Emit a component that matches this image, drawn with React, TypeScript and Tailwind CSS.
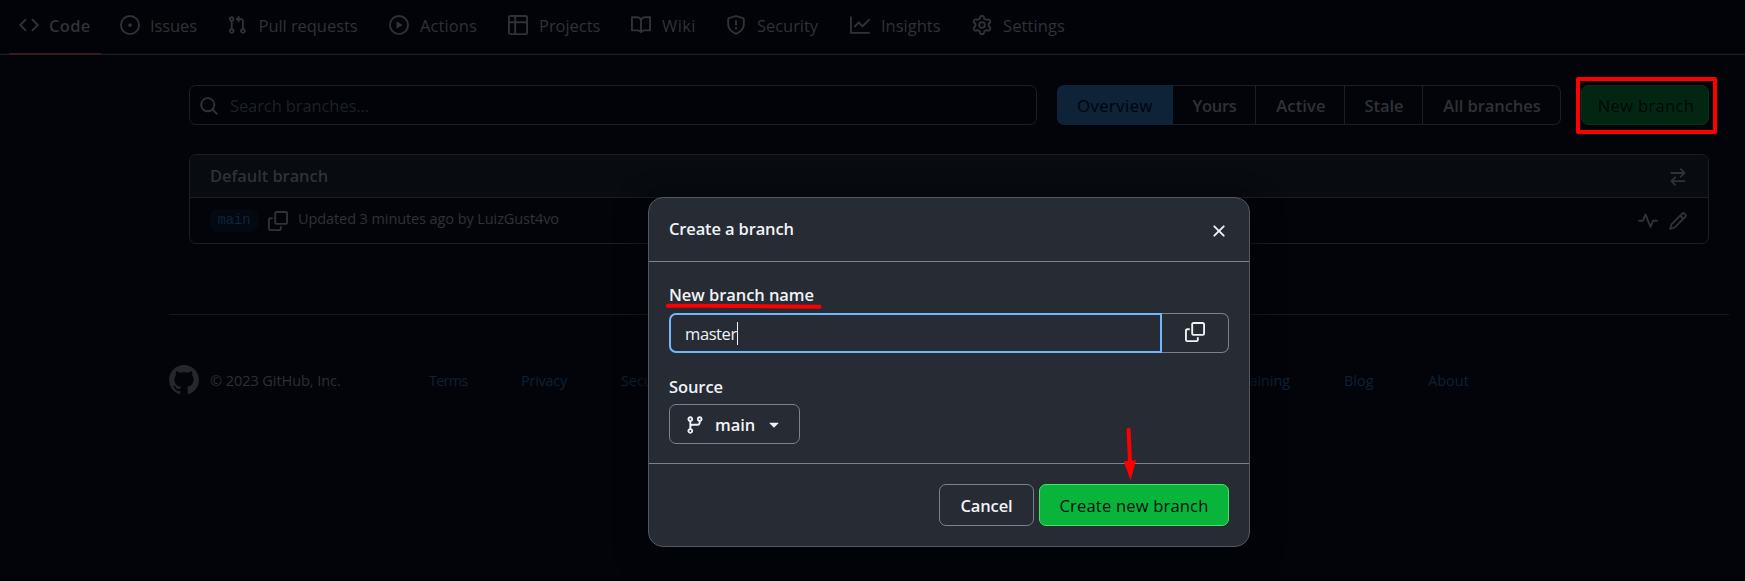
import React from "react";

type IconProps = { d: string; className?: string };

function Icon({ d, className = "" }: IconProps) {
  return (
    <svg viewBox="0 0 16 16" fill="currentColor" className={`block size-5 shrink-0 ${className}`}>
      <path d={d} />
    </svg>
  );
}

const P = {
  code: "m11.28 3.22 4.25 4.25a.75.75 0 0 1 0 1.06l-4.25 4.25a.749.749 0 0 1-1.275-.326.749.749 0 0 1 .215-.734L13.94 8l-3.72-3.72a.749.749 0 0 1 .326-1.275.749.749 0 0 1 .734.215Zm-6.56 0a.751.751 0 0 1 1.042.018.751.751 0 0 1 .018 1.042L2.06 8l3.72 3.72a.749.749 0 0 1-.326 1.275.749.749 0 0 1-.734-.215L.47 8.53a.75.75 0 0 1 0-1.06Z",
  issue: "M8 9.5a1.5 1.5 0 1 0 0-3 1.5 1.5 0 0 0 0 3ZM8 0a8 8 0 1 1 0 16A8 8 0 0 1 8 0ZM1.5 8a6.5 6.5 0 1 0 13 0 6.5 6.5 0 0 0-13 0Z",
  pull: "M1.5 3.25a2.25 2.25 0 1 1 3 2.122v5.256a2.251 2.251 0 1 1-1.5 0V5.372A2.25 2.25 0 0 1 1.5 3.25Zm5.677-.177L9.573.677A.25.25 0 0 1 10 .854V2.5h1A2.5 2.5 0 0 1 13.5 5v5.628a2.251 2.251 0 1 1-1.5 0V5a1 1 0 0 0-1-1h-1v1.646a.25.25 0 0 1-.427.177L7.177 3.427a.25.25 0 0 1 0-.354ZM3.75 2.5a.75.75 0 1 0 0 1.5.75.75 0 0 0 0-1.5Zm0 9.5a.75.75 0 1 0 0 1.5.75.75 0 0 0 0-1.5Zm8.25.75a.75.75 0 1 0 1.5 0 .75.75 0 0 0-1.5 0Z",
  play: "M8 0a8 8 0 1 1 0 16A8 8 0 0 1 8 0ZM1.5 8a6.5 6.5 0 1 0 13 0 6.5 6.5 0 0 0-13 0Zm4.879-2.773 4.264 2.559a.25.25 0 0 1 0 .428l-4.264 2.559A.25.25 0 0 1 6 10.559V5.442a.25.25 0 0 1 .379-.215Z",
  table: "M0 1.75C0 .784.784 0 1.75 0h12.5C15.216 0 16 .784 16 1.75v12.5A1.75 1.75 0 0 1 14.25 16H1.75A1.75 1.75 0 0 1 0 14.25ZM6.5 6.5v8h7.75a.25.25 0 0 0 .25-.25V6.5Zm8-1.5V1.75a.25.25 0 0 0-.25-.25H6.5V5Zm-13 1.5v7.75c0 .138.112.25.25.25H5v-8ZM5 5V1.5H1.75a.25.25 0 0 0-.25.25V5Z",
  book: "M0 1.75A.75.75 0 0 1 .75 1h4.253c1.227 0 2.317.59 3 1.501A3.743 3.743 0 0 1 11.006 1h4.245a.75.75 0 0 1 .75.75v10.5a.75.75 0 0 1-.75.75h-4.507a2.25 2.25 0 0 0-1.591.659l-.622.621a.75.75 0 0 1-1.06 0l-.622-.621A2.25 2.25 0 0 0 5.258 13H.75a.75.75 0 0 1-.75-.75Zm7.251 10.324.004-5.073-.002-2.253A2.25 2.25 0 0 0 5.003 2.5H1.5v9h3.757a3.75 3.75 0 0 1 1.994.574ZM8.755 4.75l-.004 7.322a3.752 3.752 0 0 1 1.992-.572H14.5v-9h-3.495a2.25 2.25 0 0 0-2.25 2.25Z",
  shield: "M7.467.133a1.748 1.748 0 0 1 1.066 0l5.25 1.68A1.75 1.75 0 0 1 15 3.48V7c0 1.566-.32 3.182-1.303 4.682-.983 1.498-2.585 2.813-5.032 3.855a1.697 1.697 0 0 1-1.33 0c-2.447-1.042-4.049-2.357-5.032-3.855C1.32 10.182 1 8.566 1 7V3.48a1.75 1.75 0 0 1 1.217-1.667Zm.61 1.429a.25.25 0 0 0-.153 0l-5.25 1.68a.25.25 0 0 0-.174.238V7c0 1.358.275 2.666 1.057 3.86.784 1.194 2.121 2.34 4.366 3.297a.196.196 0 0 0 .154 0c2.245-.956 3.582-2.104 4.366-3.298C13.225 9.666 13.5 8.36 13.5 7V3.48a.251.251 0 0 0-.174-.237l-5.25-1.68ZM8.75 4.75v3a.75.75 0 0 1-1.5 0v-3a.75.75 0 0 1 1.5 0ZM9 10.5a1 1 0 1 1-2 0 1 1 0 0 1 2 0Z",
  graph: "M1.5 1.75V13.5h13.75a.75.75 0 0 1 0 1.5H.75a.75.75 0 0 1-.75-.75V1.75a.75.75 0 0 1 1.5 0Zm14.28 2.53-5.25 5.25a.75.75 0 0 1-1.06 0L7 7.06 4.28 9.78a.751.751 0 0 1-1.042-.018.751.751 0 0 1-.018-1.042l3.25-3.25a.75.75 0 0 1 1.06 0L10 7.94l4.72-4.72a.751.751 0 0 1 1.042.018.751.751 0 0 1 .018 1.042Z",
  gear: "M8 0a8.2 8.2 0 0 1 .701.031C9.444.095 9.99.645 10.16 1.29l.288 1.107c.018.066.079.158.212.224.231.114.454.243.668.386.123.082.233.09.299.071l1.103-.303c.644-.176 1.392.021 1.82.63.27.385.506.792.704 1.218.315.675.111 1.422-.364 1.891l-.814.806c-.049.048-.098.147-.088.294.016.257.016.515 0 .772-.01.147.038.246.088.294l.814.806c.475.469.679 1.216.364 1.891a7.977 7.977 0 0 1-.704 1.217c-.428.61-1.176.807-1.82.63l-1.102-.302c-.067-.019-.177-.011-.3.071a5.909 5.909 0 0 1-.668.386c-.133.066-.194.158-.211.224l-.29 1.106c-.168.646-.715 1.196-1.458 1.26a8.006 8.006 0 0 1-1.402 0c-.743-.064-1.289-.614-1.458-1.26l-.289-1.106c-.018-.066-.079-.158-.212-.224a5.738 5.738 0 0 1-.668-.386c-.123-.082-.233-.09-.299-.071l-1.103.303c-.644.176-1.392-.021-1.82-.63a8.12 8.12 0 0 1-.704-1.218c-.315-.675-.111-1.422.363-1.891l.815-.806c.05-.048.098-.147.088-.294a6.214 6.214 0 0 1 0-.772c.01-.147-.038-.246-.088-.294l-.815-.806C.635 6.045.431 5.298.746 4.623a7.92 7.92 0 0 1 .704-1.217c.428-.61 1.176-.807 1.82-.63l1.102.302c.067.019.177.011.3-.071.214-.143.437-.272.668-.386.133-.066.194-.158.211-.224l.29-1.106C6.009.645 6.556.095 7.299.03 7.53.01 7.764 0 8 0Zm-.571 1.525c-.036.003-.108.036-.137.146l-.289 1.105c-.147.561-.549.967-.998 1.189-.173.086-.34.183-.5.29-.417.278-.97.423-1.529.27l-1.103-.303c-.109-.03-.175.016-.195.045-.22.312-.412.644-.573.99-.014.031-.021.11.059.19l.815.806c.411.406.562.957.53 1.456a4.709 4.709 0 0 0 0 .582c.032.499-.119 1.05-.53 1.456l-.815.806c-.081.08-.073.159-.059.19.162.346.353.677.573.989.02.03.085.076.195.046l1.102-.303c.56-.153 1.113-.008 1.53.27.161.107.328.204.501.29.447.222.85.629.997 1.189l.289 1.105c.029.109.101.143.137.146a6.6 6.6 0 0 0 1.142 0c.036-.003.108-.036.137-.146l.289-1.105c.147-.561.549-.967.998-1.189.173-.086.34-.183.5-.29.417-.278.97-.423 1.529-.27l1.103.303c.109.029.175-.016.195-.045.22-.313.411-.644.573-.99.014-.031.021-.11-.059-.19l-.815-.806c-.411-.406-.562-.957-.53-1.456a4.709 4.709 0 0 0 0-.582c-.032-.499.119-1.05.53-1.456l.815-.806c.081-.08.073-.159.059-.19a6.464 6.464 0 0 0-.573-.989c-.02-.03-.085-.076-.195-.046l-1.102.303c-.56.153-1.113.008-1.53-.27a4.44 4.44 0 0 0-.501-.29c-.447-.222-.85-.629-.997-1.189l-.289-1.105c-.029-.11-.101-.143-.137-.146a6.6 6.6 0 0 0-1.142 0ZM11 8a3 3 0 1 1-6 0 3 3 0 0 1 6 0ZM9.5 8a1.5 1.5 0 1 0-3.001.001A1.5 1.5 0 0 0 9.5 8Z",
  search: "M10.68 11.74a6 6 0 0 1-7.922-8.982 6 6 0 0 1 8.982 7.922l3.04 3.04a.749.749 0 0 1-.326 1.275.749.749 0 0 1-.734-.215ZM11.5 7a4.499 4.499 0 1 0-8.997 0A4.499 4.499 0 0 0 11.5 7Z",
  swap: "M5.22 14.78a.75.75 0 0 0 1.06-1.06L4.56 12h8.69a.75.75 0 0 0 0-1.5H4.56l1.72-1.72a.75.75 0 0 0-1.06-1.06l-3 3a.75.75 0 0 0 0 1.06l3 3Zm5.56-6.5a.75.75 0 1 1-1.06-1.06l1.72-1.72H2.75a.75.75 0 0 1 0-1.5h8.69L9.72 2.28a.75.75 0 0 1 1.06-1.06l3 3a.75.75 0 0 1 0 1.06l-3 3Z",
  pulse: "M6 2c.306 0 .582.187.696.471L10 10.731l1.304-3.26A.751.751 0 0 1 12 7h3.25a.75.75 0 0 1 0 1.5h-2.742l-1.812 4.528a.751.751 0 0 1-1.392 0L6 4.77 4.696 8.03A.75.75 0 0 1 4 8.5H.75a.75.75 0 0 1 0-1.5h2.742l1.812-4.529A.751.751 0 0 1 6 2Z",
  pencil: "M11.013 1.427a1.75 1.75 0 0 1 2.474 0l1.086 1.086a1.75 1.75 0 0 1 0 2.474l-8.61 8.61c-.21.21-.47.364-.756.445l-3.251.93a.75.75 0 0 1-.927-.928l.929-3.25c.081-.286.235-.547.445-.758l8.61-8.61Zm.176 4.823L9.75 4.81l-6.286 6.287a.253.253 0 0 0-.064.108l-.558 1.953 1.953-.558a.253.253 0 0 0 .108-.064Zm1.238-3.763a.25.25 0 0 0-.354 0L10.811 3.75l1.439 1.44 1.263-1.263a.25.25 0 0 0 0-.354Z",
  copy: "M0 6.75C0 5.784.784 5 1.75 5h1.5a.75.75 0 0 1 0 1.5h-1.5a.25.25 0 0 0-.25.25v7.5c0 .138.112.25.25.25h7.5a.25.25 0 0 0 .25-.25v-1.5a.75.75 0 0 1 1.5 0v1.5A1.75 1.75 0 0 1 9.25 16h-7.5A1.75 1.75 0 0 1 0 14.25ZM5 1.75C5 .784 5.784 0 6.75 0h7.5C15.216 0 16 .784 16 1.75v7.5A1.75 1.75 0 0 1 14.25 11h-7.5A1.75 1.75 0 0 1 5 9.25Zm1.75-.25a.25.25 0 0 0-.25.25v7.5c0 .138.112.25.25.25h7.5a.25.25 0 0 0 .25-.25v-7.5a.25.25 0 0 0-.25-.25Z",
  close: "M3.72 3.72a.75.75 0 0 1 1.06 0L8 6.94l3.22-3.22a.749.749 0 0 1 1.275.326.749.749 0 0 1-.215.734L9.06 8l3.22 3.22a.749.749 0 0 1-.326 1.275.749.749 0 0 1-.734-.215L8 9.06l-3.22 3.22a.751.751 0 0 1-1.042-.018.751.751 0 0 1-.018-1.042L6.94 8 3.72 4.78a.75.75 0 0 1 0-1.06Z",
  branch: "M9.5 3.25a2.25 2.25 0 1 1 3 2.122V6A2.5 2.5 0 0 1 10 8.5H6a1 1 0 0 0-1 1v1.128a2.251 2.251 0 1 1-1.5 0V5.372a2.25 2.25 0 1 1 1.5 0v1.836A2.493 2.493 0 0 1 6 7h4a1 1 0 0 0 1-1v-.628A2.25 2.25 0 0 1 9.5 3.25Zm-6 0a.75.75 0 1 0 1.5 0 .75.75 0 0 0-1.5 0Zm8.25-.75a.75.75 0 1 0 0 1.5.75.75 0 0 0 0-1.5ZM4.25 12a.75.75 0 1 0 0 1.5.75.75 0 0 0 0-1.5Z",
  caret: "m4.427 7.427 3.396 3.396a.25.25 0 0 0 .354 0l3.396-3.396A.25.25 0 0 0 11.396 7H4.604a.25.25 0 0 0-.177.427Z",
  github: "M8 0c4.42 0 8 3.58 8 8a8.013 8.013 0 0 1-5.45 7.59c-.4.08-.55-.17-.55-.38 0-.27.01-1.13.01-2.2 0-.75-.25-1.23-.54-1.48 1.78-.2 3.65-.88 3.65-3.95 0-.88-.31-1.59-.82-2.15.08-.2.36-1.02-.08-2.12 0 0-.67-.22-2.2.82-.64-.18-1.32-.27-2-.27-.68 0-1.36.09-2 .27-1.53-1.03-2.2-.82-2.2-.82-.44 1.1-.16 1.92-.08 2.12-.51.56-.82 1.28-.82 2.15 0 3.06 1.86 3.75 3.64 3.95-.23.2-.44.55-.51 1.07-.46.21-1.61.55-2.33-.66-.15-.24-.6-.83-1.23-.82-.67.01-.27.38.01.53.34.19.73.9.82 1.13.16.45.68 1.31 2.69.94 0 .67.01 1.3.01 1.49 0 .21-.15.45-.55.38A7.995 7.995 0 0 1 0 8c0-4.42 3.58-8 8-8Z",
};

const tabs = [
  { label: "Code", d: P.code, cls: "w-[101px] gap-2.5 font-semibold tracking-[0.3px]" },
  { label: "Issues", d: P.issue, cls: "w-[107px] gap-2.5 tracking-[-0.1px]" },
  { label: "Pull requests", d: P.pull, cls: "w-[162px] gap-[11.5px] tracking-[-0.05px]" },
  { label: "Actions", d: P.play, cls: "w-[119px] gap-[11px] tracking-[0.1px]" },
  { label: "Projects", d: P.table, cls: "w-[123px] gap-[11px] tracking-[-0.05px]" },
  { label: "Wiki", d: P.book, cls: "w-[95px] gap-[11px] tracking-[0.4px]" },
  { label: "Security", d: P.shield, cls: "w-[124px] gap-[11px] tracking-[-0.05px]" },
  { label: "Insights", d: P.graph, cls: "w-[122px] gap-[11px]" },
  { label: "Settings", d: P.gear, cls: "w-[110px] gap-[11px] tracking-[0.1px]" },
];

const filters = [
  { label: "Yours", cls: "w-[83px] border-r pl-px tracking-[-0.3px]" },
  { label: "Active", cls: "w-[89px] border-r pl-[2px] tracking-[0.15px]" },
  { label: "Stale", cls: "w-[78px] border-r pl-px tracking-[-0.1px]" },
  { label: "All branches", cls: "w-[138px] rounded-r-[7px] border-r pl-px tracking-[-0.06px]" },
];

const middleLinks = ["Security", "Status", "Docs", "Contact GitHub", "Pricing", "API", "Training"];

function RepoNav() {
  return (
    <nav className="flex h-[55px] shrink-0 flex-col bg-[#010308]">
      <div className="flex h-[53px] pl-[19px]">
        {tabs.map((t) => (
          <a key={t.label} className={`flex shrink-0 items-center pb-[3px] ${t.cls}`}>
            <Icon d={t.d} />
            <span className="pt-[2px]">{t.label}</span>
          </a>
        ))}
      </div>
      <div className="flex h-[2px] border-b border-[#1d1f23] bg-[#08090d] pl-[9px]">
        <div className="h-[2px] w-[92px] bg-[#381b1c]" />
      </div>
    </nav>
  );
}

function Toolbar() {
  return (
    <div className="flex h-10">
      <div className="flex w-[848px] items-center gap-[11px] rounded-[7px] border border-[#1c1e23] bg-[#010308] pl-[9px]">
        <Icon d={P.search} className="mt-[2px]" />
        <span className="pt-px tracking-[-0.1px] text-[#1d2126]">Search branches...</span>
      </div>
      <div className="ml-5 flex font-semibold">
        <span className="flex w-[116px] items-center justify-center rounded-l-[7px] bg-[#0e2238] pt-px font-normal tracking-[0.52px] text-[#020409]">
          Overview
        </span>
        {filters.map((f) => (
          <span key={f.label} className={`flex items-center justify-center border-y border-[#1c1e23] pt-px ${f.cls}`}>
            {f.label}
          </span>
        ))}
      </div>
      <div className="relative ml-5 flex w-32 items-center justify-center rounded-[7px] border border-[#0a3016] bg-[#032612] pt-[2px] pl-[2px] tracking-[0.34px] text-[#010705]">
        New branch
        <div className="absolute -top-[9px] -left-[6px] z-10 h-[57px] w-[141px] rounded-[2px] border-4 border-[#fe0000]" />
      </div>
    </div>
  );
}

function BranchTable() {
  return (
    <section className="mt-[29px] flex h-[90px] flex-col overflow-hidden rounded-[7px] border border-[#1c1e23]">
      <header className="flex h-[43px] items-center justify-between border-b border-[#1c1e23] bg-[#080b0f] px-5">
        <h2 className="font-semibold tracking-[-0.08px]">Default branch</h2>
        <Icon d={P.swap} className="mt-[2px]" />
      </header>
      <div className="flex flex-1 items-center px-5">
        <span className="flex h-[23px] w-12 items-center justify-center rounded-[7px] bg-[#030811] pt-px font-['Liberation_Mono',monospace] text-[13.75px] text-[#10243b]">
          main
        </span>
        <Icon d={P.copy} className="ml-[10px]" />
        <span className="ml-[10px] pb-[3px] text-[14.5px] tracking-[-0.09px]">Updated 3 minutes ago by LuizGust4vo</span>
        <Icon d={P.pulse} className="ml-auto" />
        <Icon d={P.pencil} className="ml-[10px]" />
      </div>
    </section>
  );
}

function Footer() {
  return (
    <footer className="mt-[70px] mr-4 ml-[169px] border-t border-[#17191e] pt-[50px] text-[14.5px]">
      <div className="flex h-[30px] items-center text-[#0f2036]">
        <svg viewBox="0 0 16 16" className="size-[30px] fill-[#24272b]">
          <path d={P.github} />
        </svg>
        <span className="ml-[11px] w-[219px] pt-px tracking-[-0.06px] text-[#2c2f33]">© 2023 GitHub, Inc.</span>
        <span className="w-[92px] pt-px tracking-[-0.8px]">Terms</span>
        <span className="w-[100px] pt-px tracking-[-0.25px]">Privacy</span>
        <div className="flex w-[669px] justify-between pt-px tracking-[-0.1px]">
          {middleLinks.map((l) => (
            <span key={l}>{l}</span>
          ))}
        </div>
        <span className="ml-[54px] w-[84px] pt-px">Blog</span>
        <span className="pt-px">About</span>
      </div>
    </footer>
  );
}

function Dialog() {
  return (
    <div
      role="dialog"
      className="absolute top-[197px] left-[648px] z-20 flex h-[350px] w-[602px] flex-col rounded-[15px] border border-[#525761] bg-[#272b33] text-[#f0f3f6] shadow-[0_8px_28px_4px_rgba(1,4,9,0.7)]"
    >
      <header className="flex h-16 items-center justify-between border-b border-[#7a828e] px-5">
        <h1 className="pb-px font-semibold tracking-[-0.14px]">Create a branch</h1>
        <Icon d={P.close} className="mt-[2px]" />
      </header>

      <div className="flex h-[202px] flex-col border-b border-[#7a828e] px-5">
        <label className="mt-[20px] h-[31px] leading-[25px] font-semibold tracking-[-0.06px]">New branch name</label>
        <div className="flex h-10 shrink-0">
          <div className="flex w-[493px] items-center rounded-l-[7px] border-2 border-[#71b7ff] pl-[14px]">
            <span className="pt-px tracking-[-0.4px]">master</span>
            <span className="h-[23px] w-px bg-[#f0f3f6]" />
          </div>
          <div className="flex w-[67px] items-center justify-center rounded-r-[7px] border border-l-0 border-[#7a828e] pb-[2px]">
            <Icon d={P.copy} />
          </div>
        </div>
        <label className="mt-[21px] h-[30px] leading-[25px] font-semibold tracking-[-0.09px]">Source</label>
        <button className="flex h-10 w-[131px] shrink-0 items-center rounded-[7px] border border-[#7a828e] pl-[15px] font-semibold">
          <Icon d={P.branch} className="mt-[2px]" />
          <span className="ml-[10px] pt-px tracking-[-0.07px]">main</span>
          <Icon d={P.caret} className="ml-[9px]" />
        </button>
      </div>

      <footer className="flex flex-1 items-start justify-end gap-[5px] pt-5 pr-5">
        <button className="h-[42px] w-[95px] rounded-[7px] border border-[#7a828e] pt-px font-semibold tracking-[-0.12px]">
          Cancel
        </button>
        <button className="h-[42px] w-[190px] rounded-[7px] border border-[#4ae168] bg-[#09b43a] pt-px tracking-[0.2px] text-[#0a0c10]">
          Create new branch
        </button>
      </footer>
    </div>
  );
}

function Annotations() {
  return (
    <svg viewBox="0 0 1745 581" className="pointer-events-none absolute top-0 left-0 z-30 h-[581px] w-[1745px]">
      <path d="M667.8 305.8 712 305.8 819.4 306.8" fill="none" stroke="#fe0000" strokeWidth="4" strokeLinecap="round" />
      <path d="M1128.6 429.8 1130 463" stroke="#fe0000" strokeWidth="4" strokeLinecap="round" />
      <path d="M1123.7 461.2 1136 460.2 1130.6 480.6Z" fill="#fe0000" />
    </svg>
  );
}

export default function App() {
  return (
    <div className="relative flex h-[581px] w-[1745px] flex-col overflow-hidden border-b-2 border-black bg-[#030409] font-['Open_Sans','Noto_Sans',sans-serif] text-[16.5px] leading-6 whitespace-nowrap text-[#2f3236]">
      <RepoNav />
      <main className="mr-9 ml-[189px] pt-[30px]">
        <Toolbar />
        <BranchTable />
      </main>
      <Footer />
      <Dialog />
      <Annotations />
    </div>
  );
}
